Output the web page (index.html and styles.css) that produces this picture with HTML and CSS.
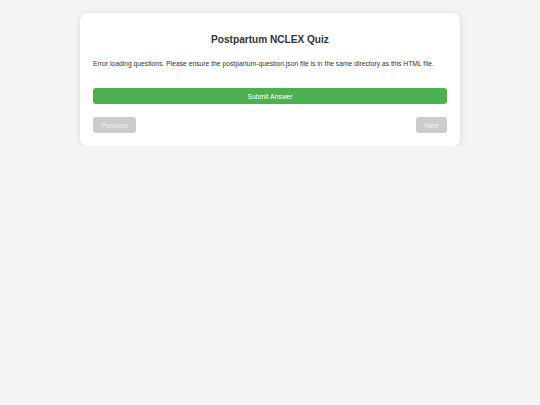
FILE: index.html
```html
<!DOCTYPE html>
<html>
<head>
<meta charset="utf-8">
<title>Postpartum NCLEX Quiz</title>
<link rel="stylesheet" href="styles.css">
</head>
<body>
<div class="card">
  <h1 class="title">Postpartum NCLEX Quiz</h1>
  <p class="message">Error loading questions. Please ensure the postpartum-question.json file is in the same directory as this HTML file.</p>
  <button class="submit">Submit Answer</button>
  <div class="nav">
    <button class="nav-btn" disabled>Previous</button>
    <button class="nav-btn" disabled>Next</button>
  </div>
</div>
</body>
</html>
```

FILE: styles.css
```css
html, body {
  margin: 0;
  padding: 0;
}
body {
  background: #f4f4f4;
  font-family: "Liberation Sans", Arial, sans-serif;
  color: #333;
  padding-top: 13px;
}
.card {
  width: 380px;
  box-sizing: border-box;
  margin: 0 auto;
  background: #fff;
  border-radius: 7px;
  box-shadow: 0 1px 6px rgba(0,0,0,0.12);
  padding: 13px;
}
.title {
  font-size: 10.1px;
  font-weight: bold;
  text-align: center;
  margin: 8px 0 0;
  line-height: 12px;
}
.message {
  font-size: 6.75px;
  margin: 13px 0 0;
  line-height: 9.4px;
}
.submit {
  display: block;
  width: 100%;
  height: 16px;
  margin-top: 20px;
  background: #4caf50;
  color: #fff;
  border: none;
  border-radius: 3px;
  font-family: inherit;
  font-size: 6.75px;
  padding: 0;
}
.nav {
  display: flex;
  justify-content: space-between;
  margin-top: 13px;
}
.nav-btn {
  height: 16px;
  background: #ccc;
  color: #f0f0f0;
  border: none;
  border-radius: 3px;
  font-family: inherit;
  font-size: 6.75px;
  padding: 0 8.5px;
}
```
